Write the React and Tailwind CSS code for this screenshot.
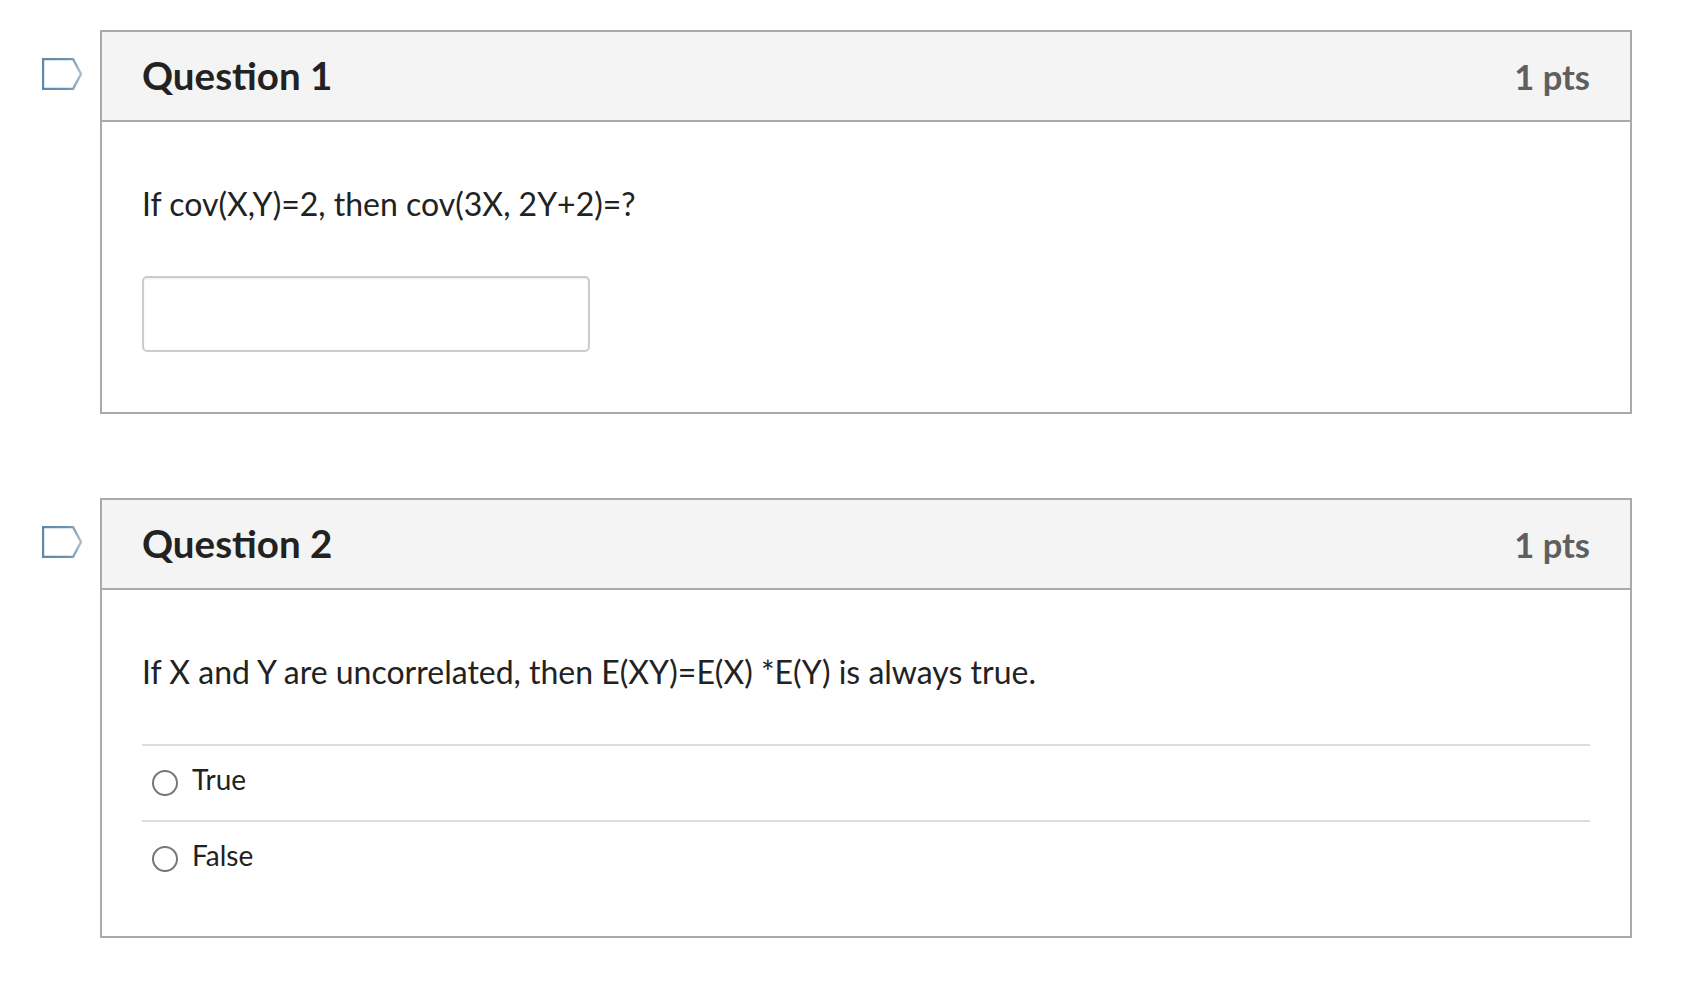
function Flag() {
  return (
    <svg width="40" height="32" viewBox="0 0 40 32" className="block shrink-0 mt-[28px]">
      <defs>
        <linearGradient id="flagStroke" x1="0" y1="0" x2="1" y2="0">
          <stop offset="0" stopColor="#5f87a8" />
          <stop offset="0.7" stopColor="#6f94b2" />
          <stop offset="1" stopColor="#a9c0d2" />
        </linearGradient>
      </defs>
      <path d="M1 1H31L39 16L31 31H1Z" fill="#fff" stroke="url(#flagStroke)" strokeWidth="2.4" />
    </svg>
  );
}

function Question({ n, text, children, bodyClass }) {
  return (
    <div className="flex items-start">
      <div className="w-[58px] shrink-0">
        <Flag />
      </div>
      <section className="w-[1532px] border-2 border-[#aaaaaa] bg-white">
        <header className="h-[90px] flex items-center justify-between px-[40px] bg-[#f4f4f4] border-b-2 border-[#aaaaaa]">
          <h2 className="text-[38.5px] font-bold text-[#222222] leading-none mb-[2px]">Question {n}</h2>
          <span className="text-[34.5px] font-bold text-[#5f5f5f] leading-none mt-[2px]">1 pts</span>
        </header>
        <div className={bodyClass}>
          <p className="text-[32px] leading-[44px] text-[#222222]">{text}</p>
          {children}
        </div>
      </section>
    </div>
  );
}

function Option({ label }) {
  return (
    <label className="h-[76px] flex items-center border-t-2 border-[#dddddd] pl-[10px]">
      <span className="w-[26px] h-[26px] rounded-full border-2 border-[#777777] bg-white shrink-0" />
      <span className="ml-[14px] text-[28px] leading-none text-[#222222] mb-[8px]">{label}</span>
    </label>
  );
}

export default function App() {
  return (
    <div className="min-h-[982px] bg-white pt-[30px] pl-[42px] flex flex-col gap-[84px] font-['Lato',sans-serif]">
      <Question n={1} text="If cov(X,Y)=2, then cov(3X, 2Y+2)=?" bodyClass="h-[290px] pt-[60px] px-[40px]">
        <div className="mt-[50px] w-[448px] h-[76px] rounded-[5px] border-2 border-[#cccccc] bg-white shadow-[inset_0_1px_2px_rgba(0,0,0,0.08)]" />
      </Question>
      <Question n={2} text="If X and Y are uncorrelated, then E(XY)=E(X) *E(Y) is always true." bodyClass="h-[346px] pt-[60px] px-[40px]">
        <div className="mt-[50px]">
          <Option label="True" />
          <Option label="False" />
        </div>
      </Question>
    </div>
  );
}
